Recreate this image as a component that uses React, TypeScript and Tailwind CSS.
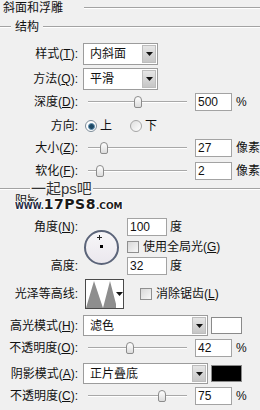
import React from "react";

const FONT = "font-[family-name:'Liberation_Sans','Noto_Sans_CJK_SC',sans-serif]";

function Etched({ className = "" }: { className?: string }) {
  return <div className={`h-[2px] border-t border-b border-t-[#a3a3a3] border-b-white ${className}`} />;
}

function Label({ children, className = "" }: { children: React.ReactNode; className?: string }) {
  return (
    <div className={`w-[78px] shrink-0 text-right whitespace-nowrap leading-[14px] ${className}`}>{children}</div>
  );
}

function Arrow() {
  return (
    <svg width="7" height="4" viewBox="0 0 7 4">
      <path d="M0 0H7L3.5 4Z" fill="#111" />
    </svg>
  );
}

function Select({ text, className }: { text: string; className: string }) {
  return (
    <div className={`flex h-full items-stretch border border-[#9c9c9c] bg-white ${className}`}>
      <div className="flex flex-1 items-center pl-[6px] leading-[14px]">{text}</div>
      <div className="my-[1px] mr-[1px] flex w-[14px] items-center justify-center border border-[#bdbdbd] bg-gradient-to-b from-[#e6e6e6] to-[#c6c6c6]">
        <Arrow />
      </div>
    </div>
  );
}

function Slider({ pos }: { pos: number }) {
  return (
    <div className="relative ml-[10px] flex h-full w-[99px] shrink-0 items-center">
      <div className="h-[2px] w-full border-t border-b border-t-[#a8a8a8] border-b-white" />
      <div
        className="absolute top-1/2 h-[12px] w-[8px] -translate-y-1/2 rounded-t-[4px] rounded-b-[2px] border border-[#8c8c8c] bg-gradient-to-b from-white to-[#dcdcdc]"
        style={{ left: pos - 4 }}
      />
    </div>
  );
}

function Input({ value, className = "" }: { value: string; className?: string }) {
  return (
    <div className={`flex h-full items-center border border-[#a3a3a3] bg-white pl-[2px] leading-[14px] ${className}`}>
      {value}
    </div>
  );
}

function Checkbox() {
  return <div className="h-[12px] w-[12px] shrink-0 border border-[#8f8f8f] bg-gradient-to-br from-[#d8d8d8] to-[#f8f8f8]" />;
}

function SliderRow({
  label,
  pos,
  value,
  unit,
  className,
}: {
  label: React.ReactNode;
  pos: number;
  value: string;
  unit: string;
  className: string;
}) {
  return (
    <div className={`flex h-[18px] items-center ${className}`}>
      <Label>{label}</Label>
      <Slider pos={pos} />
      <Input value={value} className="ml-[8px] w-[37px]" />
      <div className="ml-[4px] leading-[14px]">{unit}</div>
    </div>
  );
}

export default function App() {
  return (
    <div className={`relative h-[410px] w-[260px] overflow-hidden bg-[#f0f0f0] text-[12px] text-[#111] ${FONT}`}>
      {/* Title */}
      <div className="flex h-[16px] items-center">
        <div className="pl-[3px] leading-[14px]">斜面和浮雕</div>
        <Etched className="ml-[21px] flex-1" />
      </div>

      {/* Group: 结构 */}
      <div className="mt-[4px] flex h-[14px] items-center">
        <Etched className="w-[11px]" />
        <div className="ml-[4px] leading-[14px]">结构</div>
        <Etched className="ml-[4px] flex-1" />
      </div>

      <div className="mt-[9px] flex h-[22px] items-center">
        <Label>
          样式(<u>T</u>):
        </Label>
        <Select text="内斜面" className="ml-[5px] w-[75px]" />
      </div>

      <div className="mt-[3px] flex h-[22px] items-center">
        <Label>
          方法(<u>Q</u>):
        </Label>
        <Select text="平滑" className="ml-[5px] w-[75px]" />
      </div>

      <SliderRow
        className="mt-[3px]"
        label={
          <>
            深度(<u>D</u>):
          </>
        }
        pos={50}
        value="500"
        unit="%"
      />

      <div className="mt-[8px] flex h-[14px] items-center">
        <Label>方向:</Label>
        <div className="ml-[7px] flex h-[12px] w-[12px] items-center justify-center rounded-full border border-[#7d8c99] bg-white">
          <div className="h-[7px] w-[7px] rounded-full border border-[#5f8fb0] bg-[#1d4864]" />
        </div>
        <div className="ml-[3px] leading-[14px]">上</div>
        <div className="ml-[18px] h-[12px] w-[12px] rounded-full border border-[#a5a5a5] bg-gradient-to-br from-[#dedede] to-white" />
        <div className="ml-[3px] leading-[14px]">下</div>
      </div>

      <SliderRow
        className="mt-[6px]"
        label={
          <>
            大小(<u>Z</u>):
          </>
        }
        pos={16}
        value="27"
        unit="像素"
      />
      <SliderRow
        className="mt-[5px]"
        label={
          <>
            软化(<u>F</u>):
          </>
        }
        pos={12}
        value="2"
        unit="像素"
      />

      <Etched className="mt-[8px] w-full" />

      {/* Group: 阴影 */}
      <div className="mt-[4px] flex h-[14px] items-center pl-[15px]">
        <div className="leading-[14px]">阴影</div>
      </div>

      {/* Angle section */}
      <div className="mt-[10px] grid grid-cols-[78px_49px_1fr] grid-rows-[18px_21px_18px]">
        <Label className="col-start-1 row-start-1 self-center">
          角度(<u>N</u>):
        </Label>
        <div className="relative col-start-2 row-span-3 row-start-1 ml-[6px] mt-[12px] h-[35px] w-[35px] rounded-full border-2 border-[#5b6479] bg-gradient-to-b from-[#f7f6f8] to-[#ebe8ee]">
          <div className="absolute left-[13px] top-[3px] h-[5px] w-[1px] bg-[#222]" />
          <div className="absolute left-[11px] top-[5px] h-[1px] w-[5px] bg-[#222]" />
          <div className="absolute left-[14px] top-[13px] h-[3px] w-[3px] bg-black" />
        </div>
        <div className="col-start-3 row-start-1 flex h-[18px] items-center">
          <Input value="100" className="w-[40px]" />
          <div className="ml-[3px] leading-[14px]">度</div>
        </div>
        <div className="col-start-3 row-start-2 flex items-center">
          <Checkbox />
          <div className="ml-[4px] leading-[14px] whitespace-nowrap">
            使用全局光(<u>G</u>)
          </div>
        </div>
        <Label className="col-start-1 row-start-3 self-center">高度:</Label>
        <div className="col-start-3 row-start-3 flex h-[18px] items-center">
          <Input value="32" className="w-[40px]" />
          <div className="ml-[3px] leading-[14px]">度</div>
        </div>
      </div>

      {/* Gloss contour */}
      <div className="mt-[4px] flex h-[30px] items-center">
        <Label>光泽等高线:</Label>
        <div className="ml-[7px] flex h-[30px] w-[39px] border border-[#4a4a4a] bg-white">
          <svg width="30" height="28" viewBox="0 0 30 28" className="block">
            <path d="M0 28 L8 1 L17 28 L24 1 L30 24 L30 28 Z" fill="#8e8e8e" />
          </svg>
          <div className="flex flex-1 items-center justify-center">
            <Arrow />
          </div>
        </div>
        <div className="ml-[16px]">
          <Checkbox />
        </div>
        <div className="ml-[4px] leading-[14px] whitespace-nowrap">
          消除锯齿(<u>L</u>)
        </div>
      </div>

      <div className="mt-[6px] flex h-[21px] items-center">
        <Label>
          高光模式(<u>H</u>):
        </Label>
        <Select text="滤色" className="ml-[5px] w-[125px]" />
        <div className="ml-[3px] h-[17px] w-[31px] border border-[#8a8a8a] bg-white" />
      </div>

      <SliderRow
        className="mt-[3px]"
        label={
          <>
            不透明度(<u>O</u>):
          </>
        }
        pos={42}
        value="42"
        unit="%"
      />

      <div className="mt-[6px] flex h-[21px] items-center">
        <Label>
          阴影模式(<u>A</u>):
        </Label>
        <Select text="正片叠底" className="ml-[5px] w-[125px]" />
        <div className="ml-[3px] h-[17px] w-[31px] border border-[#8a8a8a] bg-black" />
      </div>

      <SliderRow
        className="mt-[3px]"
        label={
          <>
            不透明度(<u>C</u>):
          </>
        }
        pos={74}
        value="75"
        unit="%"
      />

      {/* Watermarks overlay */}
      <div className="absolute left-[30px] top-[181px] bg-[#f0f0f0] px-[1px] text-[15px] leading-[16px] text-[#333] [text-shadow:0_0_2px_#fff]">
        一起ps吧
      </div>
      <div className="absolute left-[15px] top-[197px] flex items-baseline font-[family-name:'DejaVu_Sans',sans-serif] font-bold leading-none text-[#1b1b1b] [text-shadow:1px_0_0_#fff,-1px_0_0_#fff,0_1px_0_#fff,0_-1px_0_#fff]">
        <span className="text-[8px] text-[#1f2a44]">WWW.</span>
        <span className="text-[14px] font-black tracking-[0.5px]">17PS8</span>
        <span className="text-[9px]">.COM</span>
      </div>
    </div>
  );
}
